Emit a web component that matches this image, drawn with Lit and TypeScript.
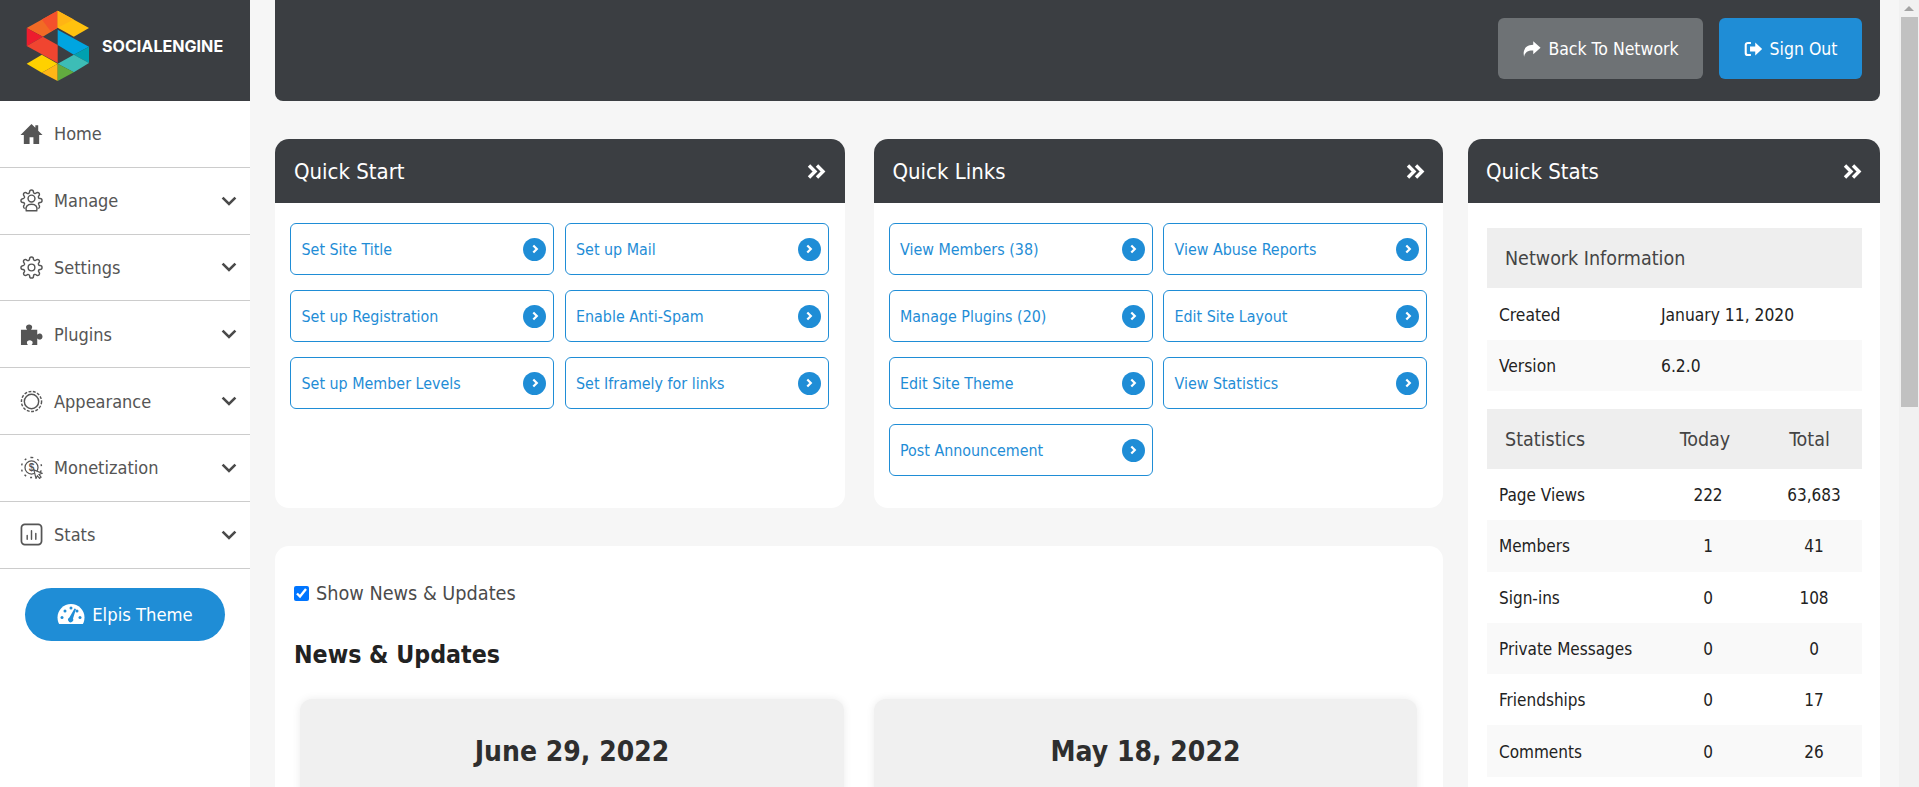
import { LitElement, html, css, svg } from "lit";
import { customElement } from "lit/decorators.js";

const GEAR = "M19.4 15a1.65 1.65 0 0 0 .33 1.82l.06.06a2 2 0 0 1 0 2.83 2 2 0 0 1-2.83 0l-.06-.06a1.65 1.65 0 0 0-1.82-.33 1.65 1.65 0 0 0-1 1.51V21a2 2 0 0 1-2 2 2 2 0 0 1-2-2v-.09A1.65 1.65 0 0 0 9 19.4a1.65 1.65 0 0 0-1.82.33l-.06.06a2 2 0 0 1-2.83 0 2 2 0 0 1 0-2.83l.06-.06a1.65 1.65 0 0 0 .33-1.82 1.65 1.65 0 0 0-1.51-1H3a2 2 0 0 1-2-2 2 2 0 0 1 2-2h.09A1.65 1.65 0 0 0 4.6 9a1.65 1.65 0 0 0-.33-1.82l-.06-.06a2 2 0 0 1 0-2.83 2 2 0 0 1 2.83 0l.06.06a1.65 1.65 0 0 0 1.82.33H9a1.65 1.65 0 0 0 1-1.51V3a2 2 0 0 1 2-2 2 2 0 0 1 2 2v.09a1.65 1.65 0 0 0 1 1.51 1.65 1.65 0 0 0 1.82-.33l.06-.06a2 2 0 0 1 2.83 0 2 2 0 0 1 0 2.83l-.06.06a1.65 1.65 0 0 0-.33 1.82V9a1.65 1.65 0 0 0 1.51 1H21a2 2 0 0 1 2 2 2 2 0 0 1-2 2h-.09a1.65 1.65 0 0 0-1.51 1z";

const ICONS: Record<string, unknown> = {
  home: svg`<path fill="#555" d="M12 2 0.500 13.500h3.500V23h6v-7h4v7h6v-9.500h3.500L19 9V3.500h-3v2.500z"/>`,
  manage: svg`<g fill="none" stroke="#555" stroke-width="1.5" stroke-linecap="round" stroke-linejoin="round"><path d="${GEAR}"/></g><rect x="5" y="16" width="14" height="8" fill="#fff"/><g fill="none" stroke="#555" stroke-width="1.5"><circle cx="12" cy="10" r="3.6"/><path d="M6.5 22.6c-1-4 1-6.6 5.5-6.6s6.500 2.600 5.500 6.600z"/></g>`,
  settings: svg`<g fill="none" stroke="#555" stroke-width="1.5" stroke-linecap="round" stroke-linejoin="round"><circle cx="12" cy="12" r="3.500"/><path d="${GEAR}"/></g>`,
  plugins: svg`<path fill="#555" d="M1 7h6.500c-1-1.200-1.200-2-1.200-2.800C6.300 2.600 7.800 1.500 9.500 1.500s3.200 1.100 3.200 2.700c0 .8-.3 1.600-1.200 2.800H18v5.200c1.200-1 2-1.200 2.800-1.200 1.600 0 2.700 1.500 2.700 3.200s-1.100 3.200-2.700 3.200c-.8 0-1.600-.3-2.800-1.200V23h-6c.9-1 1.200-1.800 1.200-2.500 0-1.400-1.300-2.400-3-2.400s-3 1-3 2.400c0 .7.3 1.500 1.200 2.500H1z"/>`,
  appearance: svg`<g fill="none" stroke="#555"><circle cx="12" cy="12" r="10.500" stroke-width="1.500" stroke-dasharray="3 1.600"/><circle cx="12" cy="12" r="7.500" stroke-width="1.500"/></g>`,
  monetization: svg`<g fill="none" stroke="#555" stroke-width="1.300"><circle cx="12" cy="12" r="6.800"/><path stroke-dasharray="2 4.400" stroke-width="1.500" d="M12 1.500a10.500 10.500 0 1 1-.01 0"/></g><text x="12" y="15.500" text-anchor="middle" font-family="Liberation Sans, sans-serif" font-size="10.500" font-weight="700" fill="#555">$</text><path fill="#fff" stroke="#555" stroke-width="1.200" d="M14.500 14.500 23 18l-3.200 1.200 2.200 2.800-1.600 1.400-2.300-2.800-1.400 2.900z"/>`,
  stats: svg`<rect x="1.500" y="1.500" width="21" height="21" rx="3.500" fill="none" stroke="#555" stroke-width="1.800"/><g stroke="#555" stroke-width="1.500" stroke-linecap="round"><path d="M7.500 13v4M12 8v9M16.500 11v6"/></g>`,
};

const chevronDown = svg`<path d="M1.600 1.600 8 8l6.400-6.400" fill="none" stroke="#4a4a4a" stroke-width="2.600"/>`;
const dbl = html`<svg class="dbl" viewBox="0 0 19 15"><path d="M2 1.500 8 7.500l-6 6M10 1.500l6 6-6 6" fill="none" stroke="#fff" stroke-width="3.400"/></svg>`;
const circ = html`<span class="circ"><svg viewBox="0 0 10 10" width="10" height="10"><path d="M3.300 1.500 6.800 5 3.300 8.500" fill="none" stroke="#fff" stroke-width="2.200"/></svg></span>`;

const logoPieces: [string, string][] = [
  ["#f26a25", "20,73 112,20 112,72 68,100"],
  ["#f4512c", "65,47 112,20 112,72 92,84"],
  ["#ffc20e", "112,20 205,73 160,100 112,72"],
  ["#ffb414", "112,20 160,47 112,72"],
  ["#ed1c2e", "20,73 68,100 20,128"],
  ["#f04530", "20,128 68,100 112,125 112,180"],
  ["#00a5e0", "112,78 205,130 160,155 112,125"],
  ["#00a0b0", "205,130 205,180 160,155"],
  ["#3dbdb6", "160,155 205,180 160,208 112,182"],
  ["#ffd100", "20,182 65,155 112,182 65,210"],
  ["#ffb617", "65,210 112,182 112,235"],
  ["#62ab3f", "112,182 160,208 112,235"],
];

const MENU = [
  ["home", "Home", false],
  ["manage", "Manage", true],
  ["settings", "Settings", true],
  ["plugins", "Plugins", true],
  ["appearance", "Appearance", true],
  ["monetization", "Monetization", true],
  ["stats", "Stats", true],
] as const;

const START = ["Set Site Title", "Set up Mail", "Set up Registration", "Enable Anti-Spam", "Set up Member Levels", "Set Iframely for links"];
const LINKS = ["View Members (38)", "View Abuse Reports", "Manage Plugins (20)", "Edit Site Layout", "Edit Site Theme", "View Statistics", "Post Announcement"];
const STATS = [
  ["Page Views", "222", "63,683"],
  ["Members", "1", "41"],
  ["Sign-ins", "0", "108"],
  ["Private Messages", "0", "0"],
  ["Friendships", "0", "17"],
  ["Comments", "0", "26"],
];

@customElement("app-root")
export class AppRoot extends LitElement {
  static styles = css`
    :host {
      display: block;
      height: 787px;
      overflow: hidden;
      background: #f6f6f6;
      font-family: "DejaVu Sans Condensed", "DejaVu Sans", sans-serif;
      font-stretch: condensed;
      color: #212121;
    }
    .page { display: flex; height: 787px; }
    .side { width: 250px; flex: none; background: #fff; }
    .brand { height: 101px; background: #3b3e42; display: flex; align-items: center; padding: 0 0 9px 26px; box-sizing: border-box; gap: 12px; }
    .brand svg { width: 64px; height: 72px; flex: none; }
    .brand span { color: #fff; font: 700 16.100px Inter, sans-serif; font-stretch: normal; }
    .item { height: 66.800px; box-sizing: border-box; border-bottom: 1px solid #ccc; display: flex; align-items: center; padding: 0 13px 0 20px; color: #555; font-size: 18px; }
    .item .ico { width: 23px; height: 23px; margin-right: 11px; flex: none; }
    .item span { flex: 1; }
    .chev { width: 16px; height: 10px; flex: none; }
    .elpis { margin: 19px 25px 0; height: 53px; border-radius: 27px; background: #1f8dd6; color: #fff; display: flex; align-items: center; justify-content: center; gap: 7px; font-size: 18.300px; }
    .elpis svg { width: 28px; height: 22px; }
    .main { flex: 1; padding: 0 19px 0 25px; min-width: 0; }
    .top { height: 101px; background: #3b3e42; border-radius: 0 0 8px 8px; display: flex; justify-content: flex-end; align-items: center; gap: 16px; padding: 0 18px 4px; box-sizing: border-box; }
    .btn { height: 61px; border-radius: 6px; display: flex; align-items: center; justify-content: center; gap: 7px; color: #fff; font-size: 17.500px; background: #6e7275; }
    .btn.back { width: 205px; }
    .btn.out { width: 143px; background: #1f8dd6; }
    .btn svg { width: 19px; height: 18px; flex: none; }
    .cols { display: flex; gap: 25px; margin-top: 38px; }
    .left { width: 1168px; flex: none; display: flex; flex-direction: column; gap: 38px; }
    .row { display: grid; grid-template-columns: 1fr 1fr; gap: 29px; }
    .card { background: #fff; border-radius: 14px; }
    .head { height: 64px; background: #3b3e42; border-radius: 14px 14px 0 0; color: #fff; display: flex; align-items: center; justify-content: space-between; padding: 0 18.500px 0 19px; font-size: 22px; }
    .stats .head { padding: 0 18px; }
    .dbl { width: 19px; height: 15px; flex: none; }
    .links { display: grid; grid-template-columns: 264px 264px; gap: 15px 10.500px; padding: 20px 15px 30px; height: 305px; box-sizing: border-box; align-content: start; }
    .lnk { height: 52px; box-sizing: border-box; border: 1px solid #1f8dd6; border-radius: 6px; color: #1f8dd6; font-size: 15.900px; display: flex; align-items: center; justify-content: space-between; padding: 0 7px 0 10.500px; }
    .circ { width: 23px; height: 23px; border-radius: 50%; background: #1f8dd6; display: flex; align-items: center; justify-content: center; flex: none; }
    .stats { width: 412px; flex: none; height: 660px; border-radius: 14px 14px 0 0; }
    .sbody { padding: 25px 18px 0 19px; }
    .thead { background: #eee; height: 60px; display: flex; align-items: center; padding-left: 18px; font-size: 19.500px; color: #444; }
    .grid { display: grid; grid-template-columns: 166px 110px 1fr; align-items: center; }
    .grid.thead { display: grid; padding-left: 0; margin-top: 18px; }
    .grid.thead > * { text-align: center; padding-right: 6px; }
    .grid.thead > :first-child { text-align: left; padding: 0 0 0 18px; }
    .tr { height: 51.300px; box-sizing: border-box; padding-top: 1px; font-size: 17px; color: #222; }
    .tr:nth-of-type(even) { background: #f9f9f9; }
    .tr > * { text-align: center; }
    .tr > :first-child { text-align: left; padding-left: 12px; }
    .tr > :last-child { padding-left: 3px; }
    .info { display: flex; align-items: center; height: 51.500px; box-sizing: border-box; padding-top: 2px; font-size: 17.300px; color: #222; padding-left: 12px; }
    .info span:first-child { width: 162px; }
    .info.alt { background: #f9f9f9; }
    .news { padding: 36px 26px 0 19px; height: 400px; box-sizing: border-box; }
    .chk { display: flex; align-items: center; gap: 7px; font-size: 19.700px; color: #4b4b4b; height: 22px; }
    .chk input { width: 15px; height: 15px; margin: 0; }
    h2 { margin: 35px 0 0; font-size: 24.700px; font-weight: 700; color: #222; height: 32px; line-height: 32px; }
    .dates { display: grid; grid-template-columns: 544px 543px; gap: 30px; margin: 28px 0 0 6px; }
    .date { background: #f0f0f0; border-radius: 12px; box-shadow: 0 0 8px rgba(0,0,0,.08); height: 200px; padding-top: 36px; box-sizing: border-box; text-align: center; font-size: 28px; font-weight: 700; color: #2e2e2e; }
    .bar { width: 20px; flex: none; background: #f1f1f1; display: flex; flex-direction: column; align-items: center; }
    .arrow { height: 17px; display: flex; align-items: center; }
    .arrow i { width: 0; height: 0; border: 5px solid transparent; border-top: 0; border-bottom: 5px solid #a3a3a3; }
    .thumb { width: 17px; height: 390px; background: #c1c1c1; margin-left: 1px; }
  `;

  private menuItem(key: string, label: string, more: boolean) {
    return html`<div class="item"><svg class="ico" viewBox="0 0 24 24">${ICONS[key]}</svg><span>${label}</span>${more ? html`<svg class="chev" viewBox="0 0 16 10">${chevronDown}</svg>` : ""}</div>`;
  }

  private panel(title: string, items: string[]) {
    return html`<section class="card">
      <div class="head">${title}${dbl}</div>
      <div class="links">${items.map((t) => html`<div class="lnk">${t}${circ}</div>`)}</div>
    </section>`;
  }

  render() {
    return html`<div class="page">
      <aside class="side">
        <div class="brand">
          <svg viewBox="18 18 190 220" preserveAspectRatio="none">${logoPieces.map(([c, p]) => svg`<polygon fill="${c}" points="${p}"/>`)}</svg>
          <span>SOCIALENGINE</span>
        </div>
        ${MENU.map(([k, l, m]) => this.menuItem(k, l, m))}
        <div class="elpis">
          <svg viewBox="0 0 28 22"><path fill="#fff" d="M14 1C6.500 1 .5 7 .5 14.500c0 2.500.7 5 1.700 6.500h23.600c1-1.500 1.700-4 1.700-6.500C27.500 7 21.500 1 14 1z"/><g fill="#1f8dd6"><circle cx="5" cy="14.500" r="1.500"/><circle cx="8" cy="8" r="1.500"/><circle cx="14" cy="5" r="1.500"/><circle cx="23" cy="14.500" r="1.500"/><circle cx="20" cy="8" r="1.500"/><path d="m17.500 5.500 1.500.6-3 9.500a2.600 2.600 0 1 1-3.600-1.200z"/></g></svg>
          Elpis Theme
        </div>
      </aside>
      <main class="main">
        <header class="top">
          <div class="btn back"><svg viewBox="0 0 22 20"><path fill="#fff" d="M13 1l8.500 7.500L13 16v-4.300C7.500 11.500 3.500 13 2.500 19 .5 12 3.500 5.500 13 5.200z"/></svg>Back To Network</div>
          <div class="btn out"><svg viewBox="0 0 22 20"><path fill="none" stroke="#fff" stroke-width="2.400" d="M8 3H4.500A2.500 2.500 0 0 0 2 5.500v9A2.500 2.500 0 0 0 4.500 17H8"/><path fill="#fff" d="M7 7h6V2.500l8 7.500-8 7.500V13H7z"/></svg>Sign Out</div>
        </header>
        <div class="cols">
          <div class="left">
            <div class="row">
              ${this.panel("Quick Start", START)}
              ${this.panel("Quick Links", LINKS)}
            </div>
            <section class="card news">
              <label class="chk"><input type="checkbox" checked />Show News &amp; Updates</label>
              <h2>News &amp; Updates</h2>
              <div class="dates"><div class="date">June 29, 2022</div><div class="date">May 18, 2022</div></div>
            </section>
          </div>
          <section class="card stats">
            <div class="head">Quick Stats${dbl}</div>
            <div class="sbody">
              <div class="thead">Network Information</div>
              <div class="info"><span>Created</span><span>January 11, 2020</span></div>
              <div class="info alt"><span>Version</span><span>6.2.0</span></div>
              <div class="thead grid"><span>Statistics</span><span>Today</span><span>Total</span></div>
              ${STATS.map((r) => html`<div class="grid tr"><span>${r[0]}</span><span>${r[1]}</span><span>${r[2]}</span></div>`)}
            </div>
          </section>
        </div>
      </main>
      <div class="bar"><div class="arrow"><i></i></div><div class="thumb"></div></div>
    </div>`;
  }
}
